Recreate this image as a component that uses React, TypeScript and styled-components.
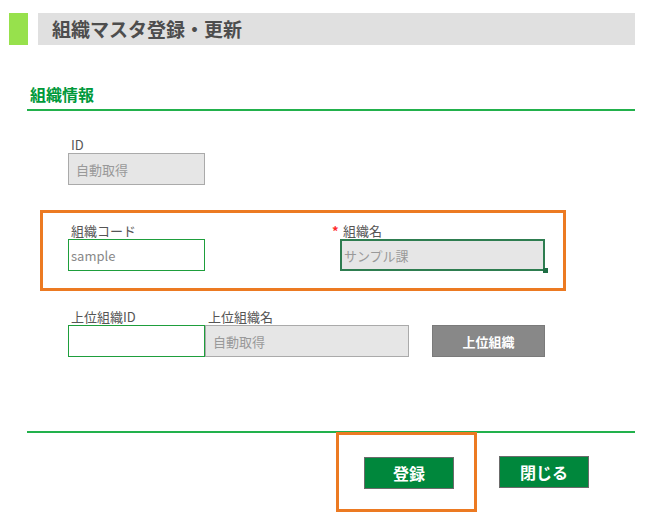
import React from 'react';
import styled, { createGlobalStyle } from 'styled-components';

const GlobalStyle = createGlobalStyle`
  html, body {
    margin: 0;
    padding: 0;
    background: #fff;
  }
  body {
    font-family: "Noto Sans CJK JP", "Noto Sans", sans-serif;
  }
  * {
    box-sizing: border-box;
  }
`;

const App = () => {
  return (
    <Page>
      <GlobalStyle />
      <Header>
        <Marker />
        <TitleBar>組織マスタ登録・更新</TitleBar>
      </Header>

      <Section>
        <SectionTitle>組織情報</SectionTitle>

        <IdField>
          <Label>ID</Label>
          <Input $width={137} $disabled readOnly value="自動取得" />
        </IdField>

        <Highlight>
          <Field $width={272}>
            <Label>組織コード</Label>
            <Input $width={137} $green $pad={2} readOnly value="sample" />
          </Field>
          <Field>
            <Label>
              <Required>*</Required>組織名
            </Label>
            <FocusWrap>
              <Input $width={205} $disabled $focused $pad={2} readOnly value="サンプル課" />
              <Handle />
            </FocusWrap>
          </Field>
        </Highlight>

        <ParentRow>
          <Field>
            <Label>上位組織ID</Label>
            <Input $width={137} $green readOnly value="" />
          </Field>
          <Field>
            <Label>上位組織名</Label>
            <Input $width={204} $disabled readOnly value="自動取得" />
          </Field>
          <GrayButton>上位組織</GrayButton>
        </ParentRow>

        <Divider />

        <Footer>
          <ActionBox>
            <GreenButton>登録</GreenButton>
          </ActionBox>
          <GreenButton>閉じる</GreenButton>
        </Footer>
      </Section>
    </Page>
  );
};

export default App;

const Page = styled.div`
  width: 649px;
  padding: 13px 14px 0 9px;
`;

const Header = styled.div`
  display: flex;
  gap: 10px;
  height: 32px;
`;

const Marker = styled.div`
  width: 19px;
  background: #97e14c;
`;

const TitleBar = styled.div`
  flex: 1;
  background: #e0e0e0;
  padding-left: 14px;
  font-size: 19px;
  font-weight: 700;
  line-height: 32px;
  color: #4d4d4d;
`;

const Section = styled.div`
  margin: 39px 0 0 18px;
  width: 608px;
`;

const SectionTitle = styled.div`
  padding: 0 0 5px 3px;
  border-bottom: 2px solid #22b14c;
  font-size: 16px;
  font-weight: 700;
  line-height: 20px;
  color: #00993a;
`;

const Field = styled.div<{ $width?: number }>`
  display: flex;
  flex-direction: column;
  width: ${({ $width }) => ($width ? `${$width}px` : 'auto')};
`;

const IdField = styled(Field)`
  margin: 26px 0 0 41px;
`;

const Label = styled.div`
  position: relative;
  padding-left: 3px;
  font-size: 13px;
  line-height: 16px;
  color: #555;
`;

const Required = styled.span`
  position: absolute;
  left: -8px;
  top: 0;
  color: #ff2a2a;
  font-weight: 700;
`;

interface InputProps {
  $width: number;
  $disabled?: boolean;
  $green?: boolean;
  $focused?: boolean;
  $pad?: number;
}

const Input = styled.input<InputProps>`
  display: block;
  width: ${({ $width }) => $width}px;
  height: 32px;
  margin: 0;
  padding: 0 0 0 ${({ $pad }) => ($pad ?? 7)}px;
  font-family: inherit;
  font-size: 13px;
  color: ${({ $disabled }) => ($disabled ? '#999' : '#888')};
  background: ${({ $disabled }) => ($disabled ? '#e6e6e6' : '#fff')};
  border: ${({ $green, $focused }) =>
    $focused ? '2px solid #2e7d50' : $green ? '1px solid #1e9e3c' : '1px solid #aaa'};
  border-radius: 0;
  outline: none;
`;

const Highlight = styled.div`
  display: flex;
  margin: 25px 0 0 13px;
  width: 526px;
  height: 81px;
  padding: 9px 0 0 25px;
  border: 3px solid #ec7a22;

  ${Label} {
    line-height: 17px;
  }
`;

const FocusWrap = styled.div`
  position: relative;
`;

const Handle = styled.div`
  position: absolute;
  right: -3px;
  bottom: -2px;
  width: 5px;
  height: 5px;
  background: #1f6e45;
`;

const ParentRow = styled.div`
  display: flex;
  align-items: flex-end;
  margin: 18px 0 0 41px;
`;

const GrayButton = styled.button`
  width: 113px;
  height: 32px;
  margin-left: 23px;
  border: 1px solid #7a7a7a;
  background: #888;
  color: #fff;
  font-family: inherit;
  font-size: 13px;
  font-weight: 700;
`;

const Divider = styled.div`
  margin-top: 74px;
  border-top: 2px solid #22b14c;
`;

const Footer = styled.div`
  display: flex;
  align-items: center;
  gap: 22px;
  margin: -1px 0 0 309px;
`;

const ActionBox = styled.div`
  border: 3px solid #ec7a22;
  padding: 22px 20px 20px 25px;
`;

const GreenButton = styled.button`
  width: 90px;
  height: 32px;
  border: 1px solid #6b6b6b;
  background: #00873c;
  color: #fff;
  font-family: inherit;
  font-size: 16px;
  font-weight: 700;
  display: block;
`;
